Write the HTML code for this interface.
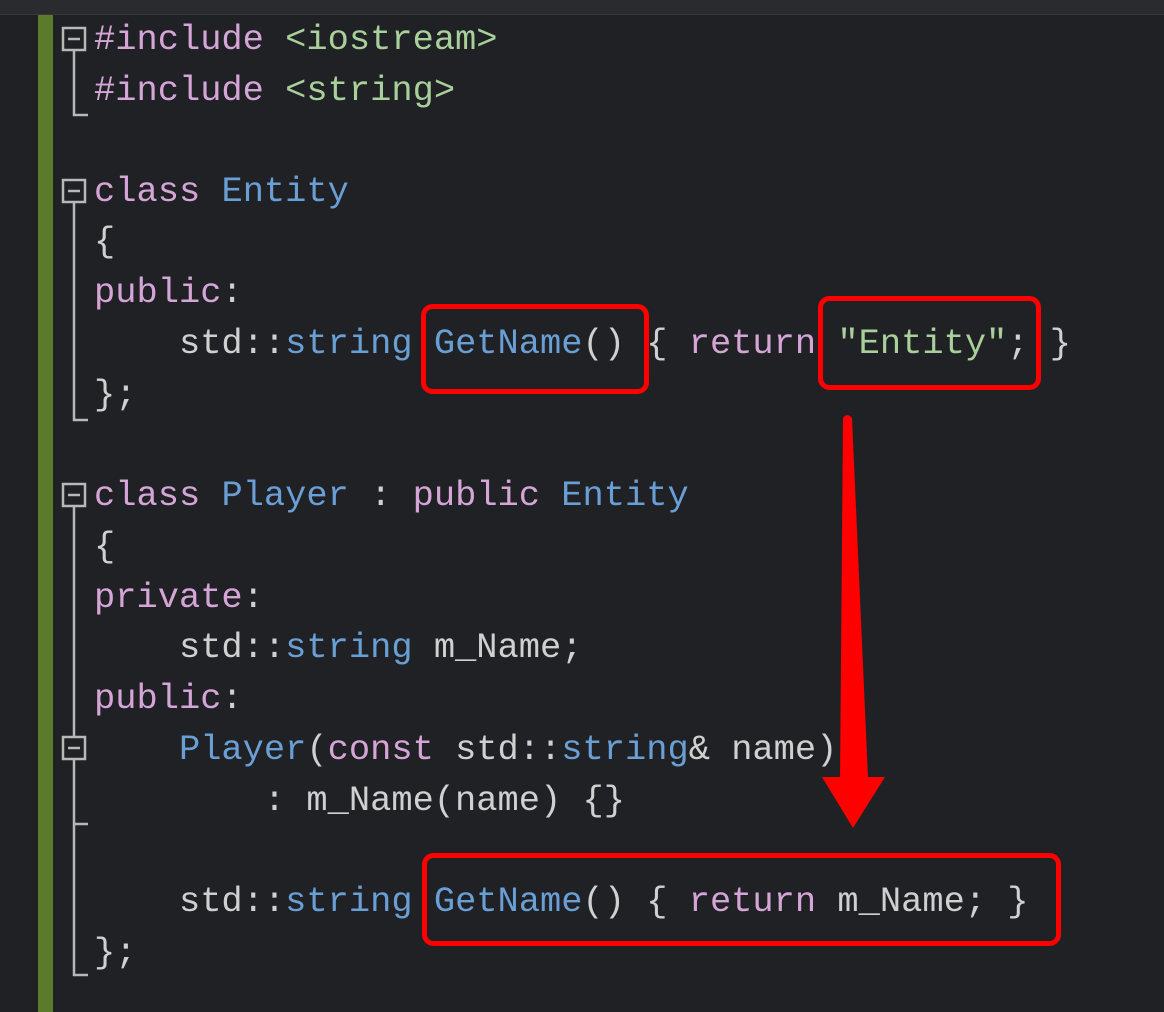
<!DOCTYPE html>
<html><head><meta charset="utf-8"><style>
html,body{margin:0;padding:0;width:1164px;height:1012px;overflow:hidden;background:#1f2124;}
.top{position:absolute;left:0;top:0;width:1164px;height:14px;background:#2a2b2f;border-bottom:1px solid #36373b;}
.bar{position:absolute;left:38px;top:15px;width:15px;height:997px;background:#5b7a2b;}
.l{position:absolute;left:94px;font-family:"Liberation Mono",monospace;font-size:35.4px;line-height:50px;height:50px;color:#d0d0d0;white-space:pre;}
.k{color:#d6a5d8}.s{color:#a9cf9b}.t{color:#6a9fd6}.f{color:#6a9fd6}
svg{position:absolute;left:0;top:0}
</style></head><body>
<div class="top"></div>
<div class="bar"></div>
<svg width="1164" height="1012">
<g fill="none" stroke="#b8b8b8" stroke-width="2.5">
<rect x="63" y="28" width="22" height="22"/><path d="M68 39h12"/>
<path d="M74 50v65h14"/>
<rect x="63" y="180" width="22" height="22"/><path d="M68 191h12"/>
<path d="M74 202v218h14"/>
<rect x="63" y="484" width="22" height="22"/><path d="M68 495h12"/>
<path d="M74 506v232"/>
<rect x="63" y="737" width="22" height="22"/><path d="M68 748h12"/>
<path d="M74 759v216h14M74 824h14"/>
</g>
</svg>
<div class="l" style="top:15px"><span class="k">#include</span> <span class="s">&lt;iostream&gt;</span></div>
<div class="l" style="top:66px"><span class="k">#include</span> <span class="s">&lt;string&gt;</span></div>
<div class="l" style="top:167px"><span class="k">class</span> <span class="t">Entity</span></div>
<div class="l" style="top:217px">{</div>
<div class="l" style="top:268px"><span class="k">public</span>:</div>
<div class="l" style="top:319px">    std::<span class="t">string</span> <span class="f">GetName</span>() { <span class="k">return</span> <span class="s">"Entity"</span>; }</div>
<div class="l" style="top:370px">};</div>
<div class="l" style="top:471px"><span class="k">class</span> <span class="t">Player</span> : <span class="k">public</span> <span class="t">Entity</span></div>
<div class="l" style="top:522px">{</div>
<div class="l" style="top:573px"><span class="k">private</span>:</div>
<div class="l" style="top:623px">    std::<span class="t">string</span> m_Name;</div>
<div class="l" style="top:674px"><span class="k">public</span>:</div>
<div class="l" style="top:725px">    <span class="t">Player</span>(<span class="k">const</span> std::<span class="t">string</span>&amp; name)</div>
<div class="l" style="top:776px">        : m_Name(name) {}</div>
<div class="l" style="top:877px">    std::<span class="t">string</span> <span class="f">GetName</span>() { <span class="k">return</span> m_Name; }</div>
<div class="l" style="top:928px">};</div>
<svg width="1164" height="1012">
<g fill="none" stroke="#ff0000" stroke-width="5">
<rect x="423.5" y="306.5" width="223" height="85" rx="9"/>
<rect x="820.5" y="298.5" width="218" height="89" rx="9"/>
<rect x="424.5" y="855.5" width="634" height="88" rx="9"/>
</g>
<path d="M843 418Q847 412 852 418L868 778H840Z" fill="#ff0000"/>
<polygon points="822,777 885,777 853,828" fill="#ff0000"/>
</svg>
</body></html>
